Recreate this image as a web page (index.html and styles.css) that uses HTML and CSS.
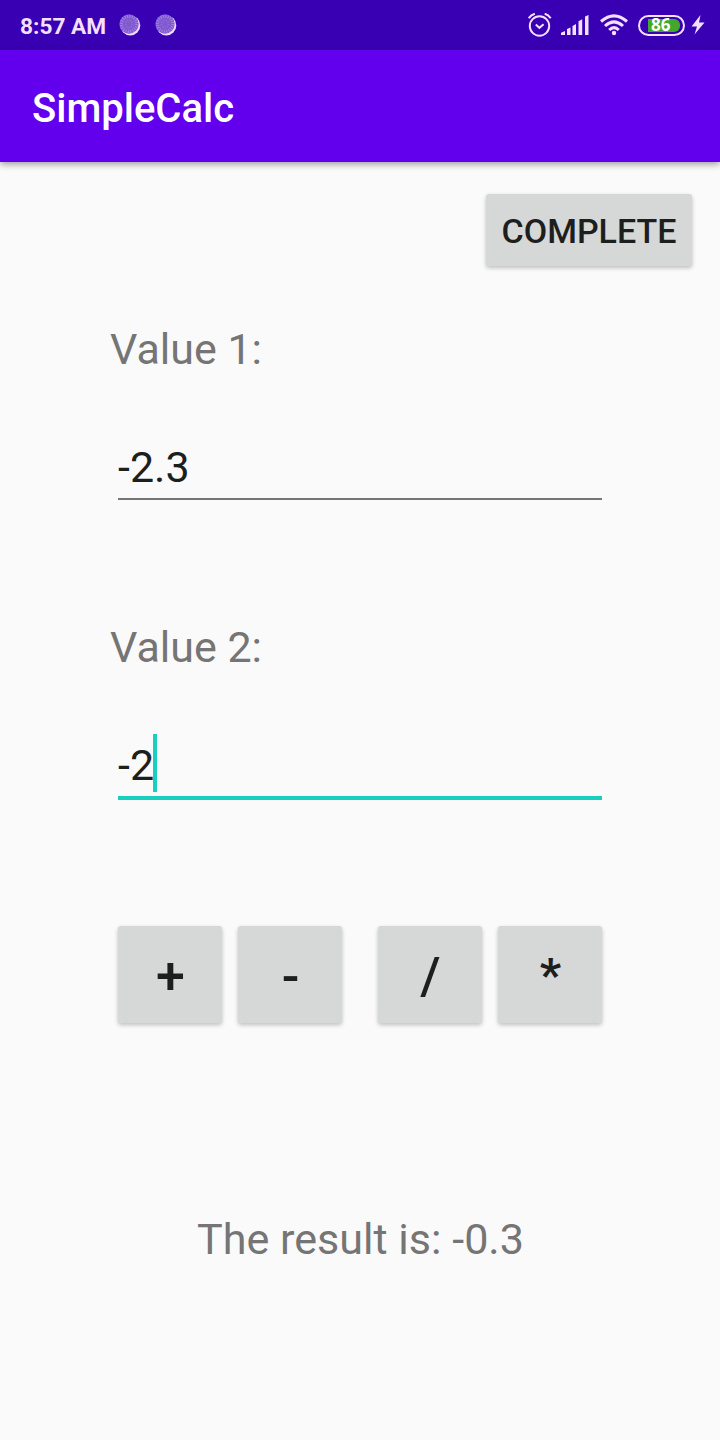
FILE: index.html
```html
<!DOCTYPE html>
<html lang="en">
<head>
<meta charset="utf-8">
<title>SimpleCalc</title>
<link rel="stylesheet" href="styles.css">
</head>
<body>
<div class="status-bar">
  <span class="clock">8:57 AM</span>
  <svg class="notice" width="22" height="22" viewBox="0 0 22 22">
    <circle cx="11.3" cy="11.4" r="10" fill="#f0daff"/>
    <circle cx="10" cy="10" r="9.7" fill="#8058d0"/>
    <circle cx="10" cy="10" r="7.6" fill="none" stroke="#a183e0" stroke-width="3" stroke-dasharray="1 1.4"/>
    <circle cx="10" cy="10" r="3.5" fill="none" stroke="#916bd9" stroke-width="2" stroke-dasharray="1 1.4"/>
  </svg>
  <svg class="notice" width="22" height="22" viewBox="0 0 22 22">
    <circle cx="11.3" cy="11.4" r="10" fill="#f0daff"/>
    <circle cx="10" cy="10" r="9.7" fill="#8058d0"/>
    <circle cx="10" cy="10" r="7.6" fill="none" stroke="#a183e0" stroke-width="3" stroke-dasharray="1 1.4"/>
    <circle cx="10" cy="10" r="3.5" fill="none" stroke="#916bd9" stroke-width="2" stroke-dasharray="1 1.4"/>
  </svg>
  <div class="indicators">
    <svg width="24" height="26" viewBox="0 0 24 26" fill="none" stroke="#f4dfff" stroke-width="2">
      <circle cx="11.500" cy="14" r="9.7"/>
      <path d="M7.800 12.6l3.6 3.2 4.2-3.6"/>
      <path d="M.8 6.2Q3 3 6.8 1.8M22.700 6.2Q20.500 3 16.700 1.8"/>
    </svg>
    <svg class="signal" width="28" height="22" viewBox="0 0 28 22" fill="#f4dfff">
      <path d="M0 21v-2.300l4-1.700v4zM6 21v-6l3.500-1.500V21zM11.500 21v-9l3.500-2v11zM17.500 21V7.200l3.700-2V21zM24 21V2.500L27.500 1v20z"/>
    </svg>
    <svg class="wifi" width="28" height="22" viewBox="0 0 28 22" fill="none" stroke="#f4dfff" stroke-width="3">
      <path d="M1 7.500Q14-3.800 27 7.500"/>
      <path d="M5 12Q14 3.800 23 12"/>
      <path d="M9.200 16Q14 11.300 18.800 16"/>
      <circle cx="14" cy="19" r="2.200" fill="#f4dfff" stroke="none"/>
    </svg>
    <div class="battery"><span class="charge">86</span></div>
    <svg class="bolt" width="14" height="20" viewBox="0 0 14 20" fill="#f4dfff">
      <path d="M9.500 0L.5 11.500H6L3.500 19.500 13.500 7.600H8z"/>
    </svg>
  </div>
</div>
<header class="app-bar">SimpleCalc</header>
<main class="screen">
  <div class="button complete">COMPLETE</div>
  <section class="field">
    <div class="label">Value 1:</div>
    <div class="entry">-2.3</div>
  </section>
  <section class="field">
    <div class="label">Value 2:</div>
    <div class="entry focused">-2<span class="caret"></span></div>
  </section>
  <div class="operators">
    <div class="button op">+</div>
    <div class="button op">-</div>
    <div class="button op second-pair">/</div>
    <div class="button op times">*</div>
  </div>
  <div class="result">The result is: -0.3</div>
</main>
</body>
</html>
```
FILE: styles.css
```css
* {
  box-sizing: border-box;
}

body {
  margin: 0;
  width: 720px;
  height: 1440px;
  overflow: hidden;
  background: #fafafa;
  color: #1d1e1e;
  font-family: Roboto, sans-serif;
}

.status-bar {
  display: flex;
  align-items: center;
  height: 50px;
  padding: 0 15px 0 20px;
  background: #3900b3;
}

.clock {
  width: 99px;
  padding-top: 3px;
  color: #f4dfff;
  font-size: 22.7px;
  font-weight: 700;
  line-height: 28px;
  white-space: nowrap;
}

.notice {
  margin-right: 14px;
}

.indicators {
  display: flex;
  align-items: center;
  margin-left: auto;
}

.signal {
  margin-left: 9px;
}

.wifi {
  margin-left: 11px;
}

.battery {
  width: 47px;
  height: 21px;
  margin-left: 10px;
  padding: 2px 4px 2px 8px;
  border: 2px solid #f4dfff;
  border-radius: 11px;
}

.charge {
  display: block;
  width: 32px;
  height: 13px;
  padding-left: 3px;
  border-radius: 0 6px 6px 0;
  background: #42a82b;
  color: #fff;
  font: 700 17px/11px "Open Sans", sans-serif;
}

.bolt {
  margin-left: 6px;
}

.app-bar {
  position: relative;
  height: 112px;
  padding: 35px 32px 29px;
  background: #6200ee;
  box-shadow: 0 2px 7px rgba(0, 0, 0, .4);
  color: #fff;
  font-size: 40px;
  font-weight: 500;
  line-height: 48px;
}

.screen {
  display: flex;
  flex-direction: column;
  padding: 32px 28px 0;
}

.button {
  display: flex;
  align-items: center;
  justify-content: center;
  border-radius: 3px;
  background: #d6d7d7;
  box-shadow: 0 2px 4px rgba(0, 0, 0, .24);
  font-weight: 500;
}

.complete {
  align-self: flex-end;
  width: 206px;
  height: 72px;
  margin-bottom: 58px;
  padding-top: 1px;
  font-size: 34px;
}

.field {
  height: 298px;
  padding: 0 90px 0 82px;
  font-size: 43px;
  line-height: 50px;
}

.label {
  color: #757575;
}

.entry {
  display: flex;
  height: 62px;
  margin: 64px 0 0 8px;
  padding-top: 4px;
  border-bottom: 2px solid #757575;
}

.entry.focused {
  height: 64px;
  border-bottom: 4px solid #19cfbd;
}

.caret {
  width: 4px;
  height: 58px;
  margin: -6px 0 0 -1px;
  background: #19cfbd;
}

.operators {
  display: flex;
  gap: 16px;
  margin: 6px 90px 0;
}

.op {
  width: 104px;
  height: 97px;
  padding: 3px 0 0 1px;
  font-size: 52px;
}

.second-pair {
  margin-left: 20px;
}

.times {
  padding-top: 0;
  font-size: 47px;
  font-weight: 700;
}

.result {
  margin-top: 192px;
  padding-left: 1px;
  color: #757575;
  font-size: 43.1px;
  line-height: 50px;
  text-align: center;
}
```
